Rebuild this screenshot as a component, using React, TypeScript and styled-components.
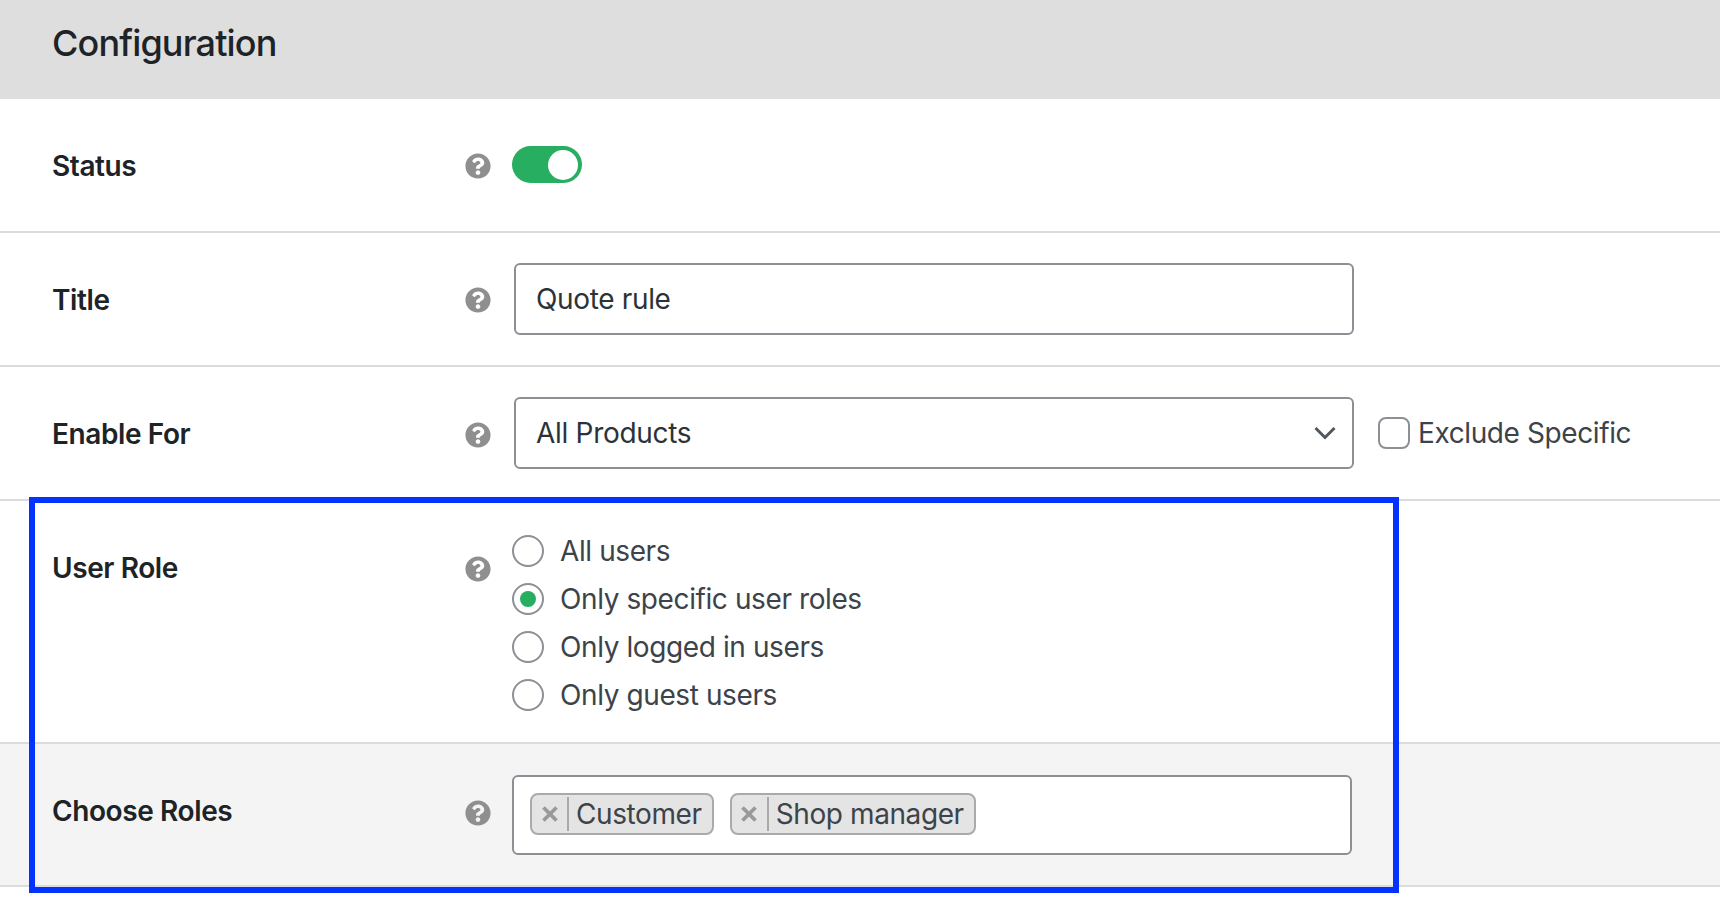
import React from 'react';
import styled, { createGlobalStyle } from 'styled-components';
import { FaQuestionCircle } from 'react-icons/fa';

const Global = createGlobalStyle`
  html, body { margin: 0; padding: 0; background: #fff; }
  body { font-family: Inter, "Liberation Sans", sans-serif; color: #3c434a; overflow: hidden; letter-spacing: -0.4px; }
  * { box-sizing: border-box; }
`;

const Page = styled.div`
  position: relative;
  width: 1720px;
  height: 906px;
`;

const Header = styled.header`
  height: 99px;
  background: #dedede;
  padding-left: 52px;
  display: flex;
  align-items: center;
`;

const Heading = styled.h2`
  margin: 0 0 14px;
  font-size: 36px;
  font-weight: 500;
  letter-spacing: -0.85px;
  color: #1d2327;
`;

const Row = styled.div<{ $height: number; $tint?: boolean; $top?: number }>`
  height: ${p => p.$height}px;
  display: grid;
  grid-template-columns: 413px 47px 1fr;
  padding-left: 52px;
  align-items: ${p => (p.$top ? 'start' : 'center')};
  padding-top: ${p => p.$top ?? 0}px;
  border-bottom: 2px solid #dcdcdc;
  background: ${p => (p.$tint ? '#f4f4f4' : 'transparent')};
`;

const Label = styled.label<{ $shift?: number }>`
  font-size: 28px;
  font-weight: 600;
  color: #1d2327;
  margin-top: ${p => p.$shift ?? 1}px;
`;

const Help = styled(FaQuestionCircle)<{ $shift?: number }>`
  display: block;
  width: 26px;
  height: 26px;
  color: #8f8f8f;
  margin-top: ${p => p.$shift ?? 0}px;
`;

const Toggle = styled.div`
  width: 70px;
  height: 37px;
  margin-top: -1px;
  border-radius: 19px;
  background: #27ae60;
  display: flex;
  align-items: center;
  justify-content: flex-end;
  padding-right: 4px;
`;

const Knob = styled.span`
  width: 30px;
  height: 30px;
  border-radius: 50%;
  background: #fff;
`;

const TextInput = styled.input`
  display: block;
  width: 840px;
  height: 72px;
  margin-left: 2px;
  padding: 0 20px;
  border: 2px solid #8c8f94;
  border-radius: 6px;
  background: #fff;
  font: 400 28px Inter, "Liberation Sans", sans-serif;
  letter-spacing: -0.35px;
  color: #2c3338;
  outline: none;
`;

const ControlLine = styled.div`
  display: flex;
  align-items: center;
`;

const SelectBox = styled.div`
  width: 840px;
  height: 72px;
  margin-left: 2px;
  padding: 0 16px 0 20px;
  border: 2px solid #8c8f94;
  border-radius: 6px;
  background: #fff;
  font-size: 28px;
  letter-spacing: -0.3px;
  color: #2c3338;
  display: flex;
  align-items: center;
  justify-content: space-between;
`;

const Check = styled.span`
  width: 32px;
  height: 32px;
  margin-left: 24px;
  border: 2px solid #8c8f94;
  border-radius: 8px;
  background: #fff;
`;

const CheckText = styled.span`
  margin-left: 8px;
  font-size: 28px;
  color: #3c434a;
`;

const RadioGroup = styled.div`
  display: flex;
  flex-direction: column;
`;

const RadioRow = styled.div`
  height: 48px;
  display: flex;
  align-items: center;
  gap: 16px;
  font-size: 28px;
  color: #3c434a;
`;

const Radio = styled.span<{ $on?: boolean }>`
  width: 32px;
  height: 32px;
  border: 2px solid #8c8f94;
  border-radius: 50%;
  background: #fff;
  display: flex;
  align-items: center;
  justify-content: center;
  &::after {
    content: '';
    display: ${p => (p.$on ? 'block' : 'none')};
    width: 16px;
    height: 16px;
    border-radius: 50%;
    background: #27ae60;
  }
`;

const MultiBox = styled.div`
  width: 840px;
  height: 80px;
  padding: 0 0 2px 16px;
  border: 2px solid #8c8f94;
  border-radius: 6px;
  background: #fff;
  display: flex;
  align-items: center;
  gap: 16px;
`;

const Chip = styled.span`
  height: 42px;
  border: 2px solid #aaa;
  border-radius: 8px;
  background: #e4e4e4;
  display: flex;
  align-items: center;
  font-size: 28px;
  color: #3c434a;
  padding-right: 10px;
`;

const ChipClose = styled.span`
  width: 37px;
  height: 34px;
  border-right: 2px solid #aaa;
  margin-right: 7px;
  display: flex;
  align-items: center;
  justify-content: center;
`;

const Highlight = styled.div`
  position: absolute;
  left: 29px;
  top: 497px;
  width: 1370px;
  height: 396px;
  border: 6px solid #0433ff;
  pointer-events: none;
`;

const CloseIcon = () => (
  <svg width="16" height="16" viewBox="0 0 16 16" fill="none">
    <path d="M1.5 1.5 L14.5 14.5 M14.5 1.5 L1.5 14.5" stroke="#999" strokeWidth="3.8" />
  </svg>
);

export default function App() {
  return (
    <Page>
      <Global />
      <Header>
        <Heading>Configuration</Heading>
      </Header>
      <Row $height={134}>
        <Label>Status</Label>
        <Help $shift={2} />
        <Toggle>
          <Knob />
        </Toggle>
      </Row>
      <Row $height={134}>
        <Label>Title</Label>
        <Help $shift={2} />
        <TextInput readOnly defaultValue="Quote rule" />
      </Row>
      <Row $height={134}>
        <Label>Enable For</Label>
        <Help $shift={3} />
        <ControlLine>
          <SelectBox>
            All Products
            <svg width="22" height="14" viewBox="0 0 22 14" fill="none">
              <path d="M1.5 2 L11 11.5 L20.5 2" stroke="#50575e" strokeWidth="3" />
            </svg>
          </SelectBox>
          <Check />
          <CheckText>Exclude Specific</CheckText>
        </ControlLine>
      </Row>
      <Row $height={243} $top={26}>
        <Label $shift={24}>User Role</Label>
        <Help $shift={29} />
        <RadioGroup>
          <RadioRow><Radio />All users</RadioRow>
          <RadioRow><Radio $on />Only specific user roles</RadioRow>
          <RadioRow><Radio />Only logged in users</RadioRow>
          <RadioRow><Radio />Only guest users</RadioRow>
        </RadioGroup>
      </Row>
      <Row $height={143} $tint>
        <Label $shift={-7}>Choose Roles</Label>
        <Help $shift={-4} />
        <MultiBox>
          <Chip><ChipClose><CloseIcon /></ChipClose>Customer</Chip>
          <Chip><ChipClose><CloseIcon /></ChipClose>Shop manager</Chip>
        </MultiBox>
      </Row>
      <Highlight />
    </Page>
  );
}
